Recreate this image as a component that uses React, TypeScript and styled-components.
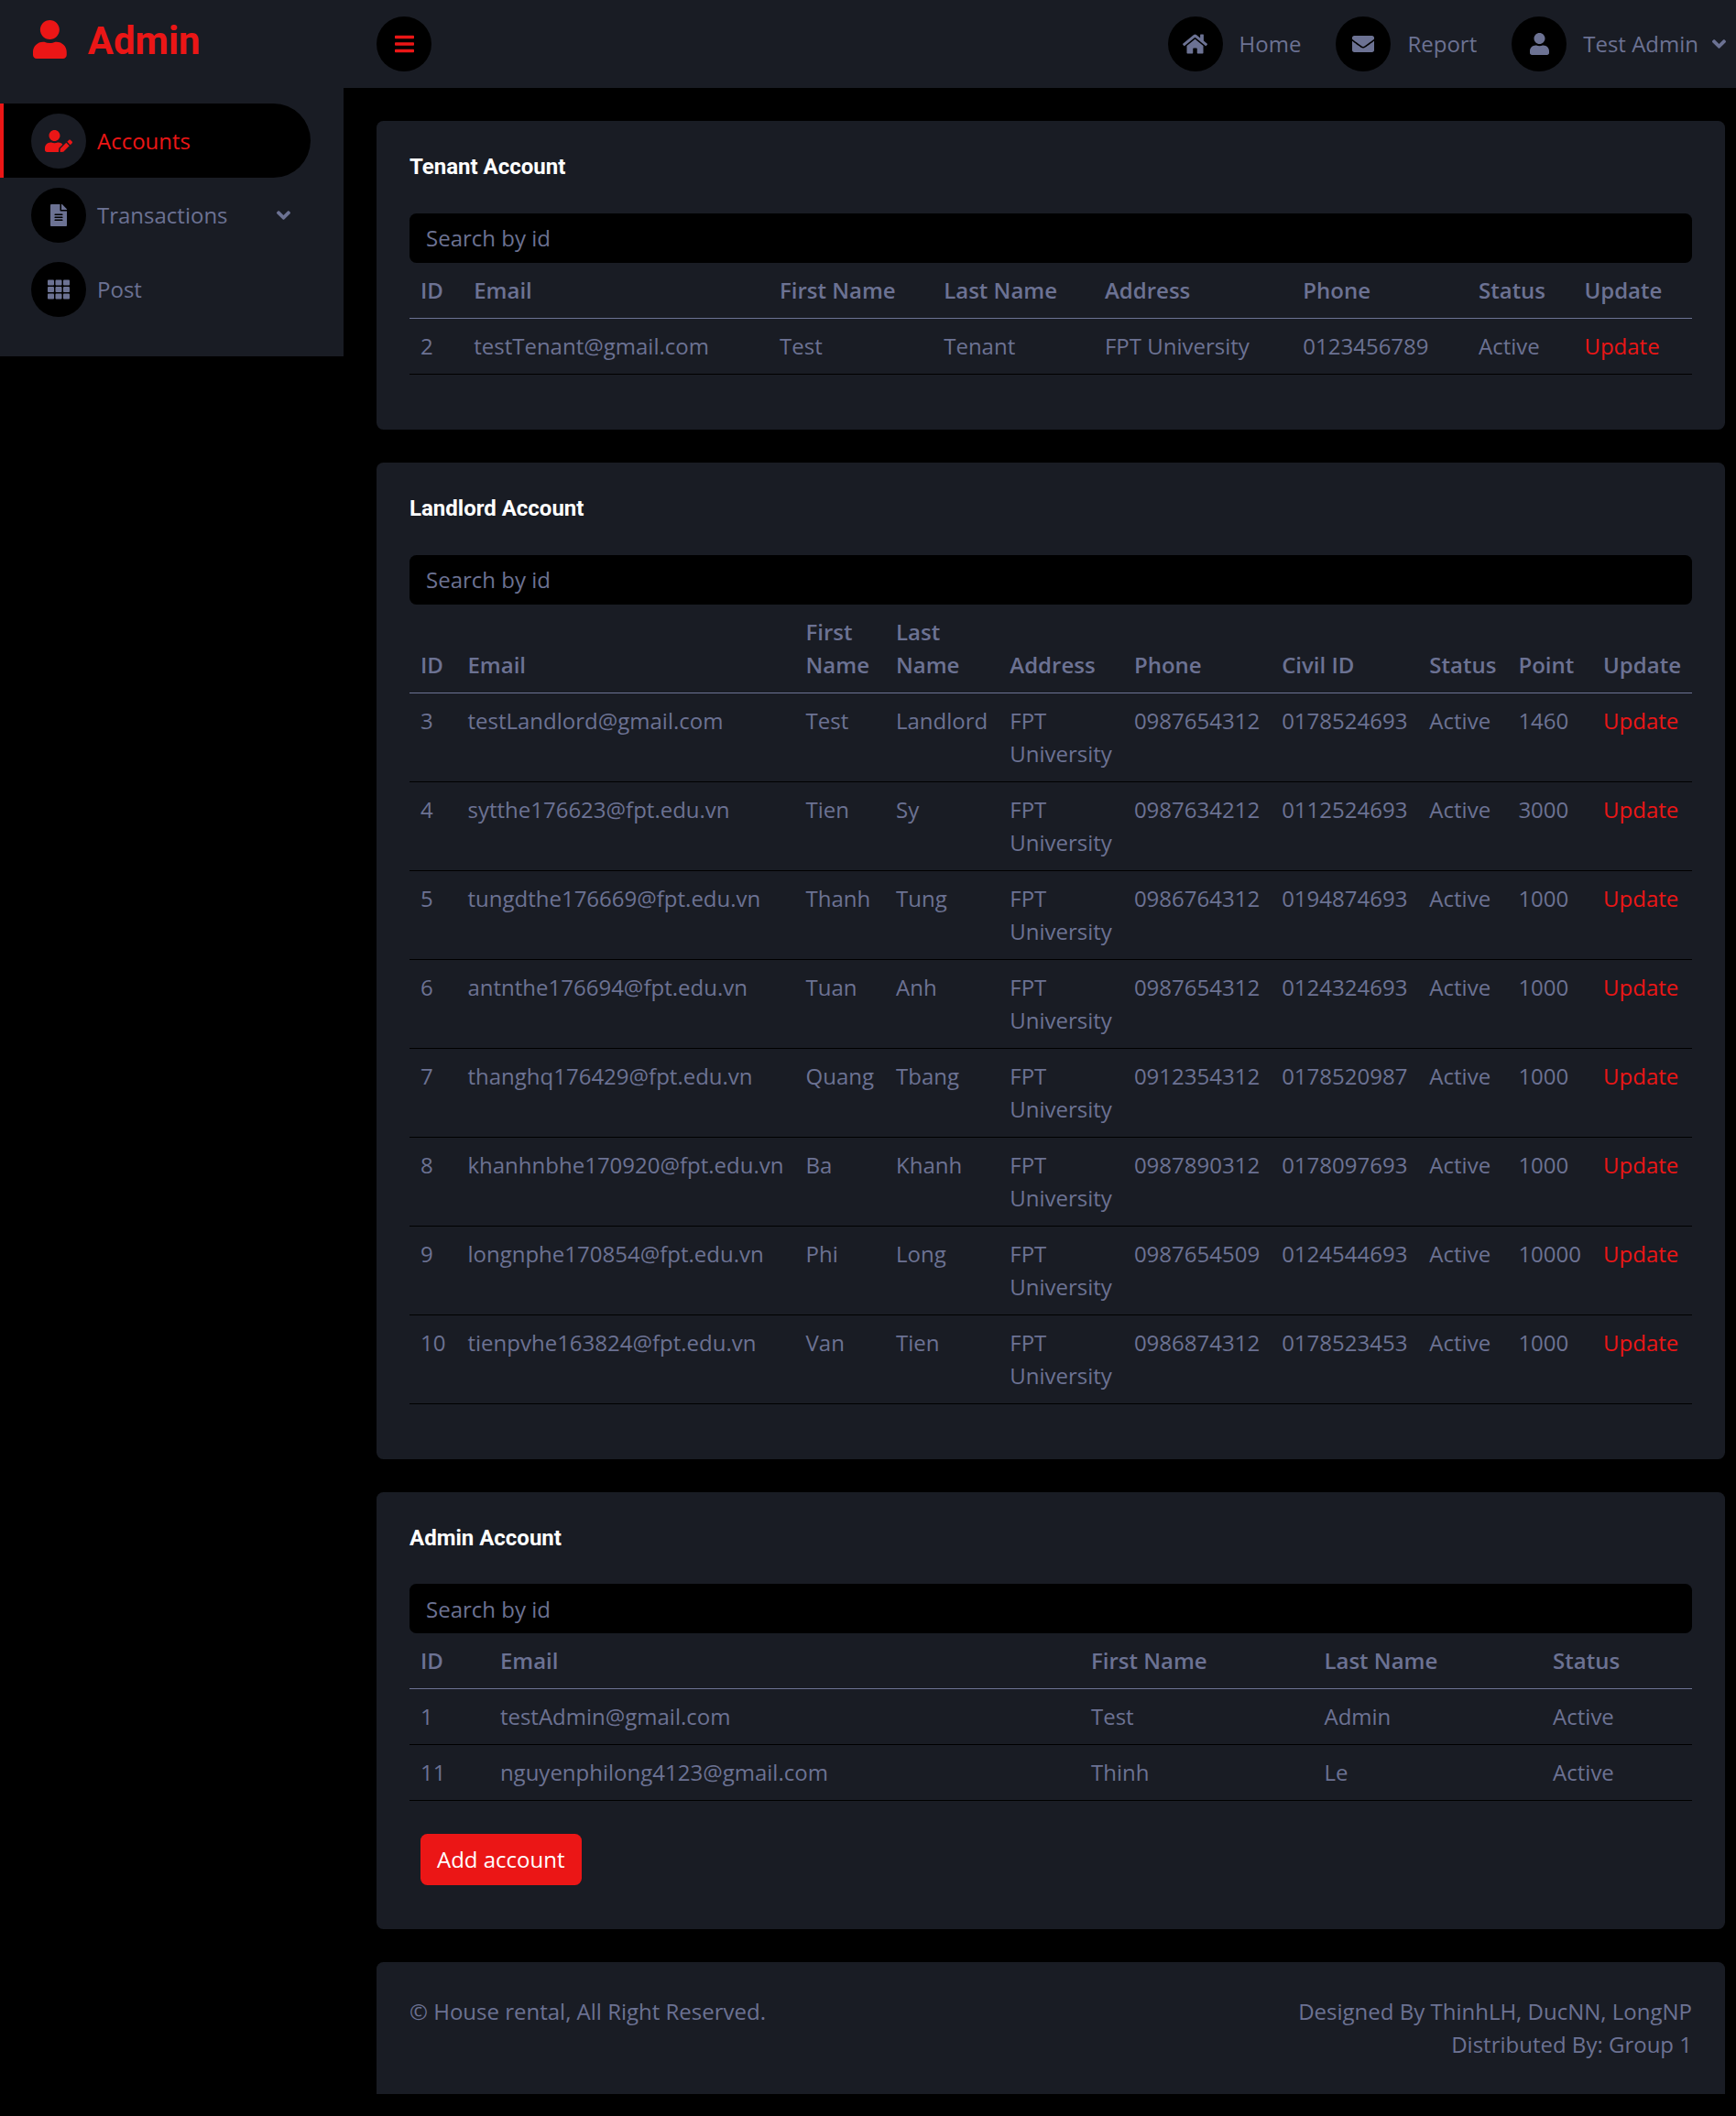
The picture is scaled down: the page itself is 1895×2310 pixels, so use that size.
import React from "react";
import styled, { createGlobalStyle } from "styled-components";
import { FaAngleDown, FaBars, FaEnvelope, FaFileAlt, FaHome, FaTh, FaUser, FaUserEdit } from "react-icons/fa";

const Global = createGlobalStyle`
  html, body { margin: 0; padding: 0; background: #000; }
  body { font-family: "Open Sans", sans-serif; font-size: 24px; line-height: 1.5; color: #6C7293; }
  * { box-sizing: border-box; }
`;

const Shell = styled.div`display: flex; align-items: flex-start; width: 100%; min-height: 2310px;`;
const Sidebar = styled.aside`width: 375px; flex: none; background: #191C24; padding: 18px 36px 33px 0;`;
const Brand = styled.div`display: flex; align-items: center; margin: 0 0 45px 36px; height: 50px; color: #EB1616;`;
const BrandIcon = styled.span`display: flex; margin-right: 23px; svg { width: 36.75px; height: 42px; }`;
const BrandTitle = styled.h3`margin: 0; padding-top: 4px; font-family: Roboto, sans-serif; font-weight: 700; font-size: 42px; line-height: 50px;`;
const NavItem = styled.div<{ $active?: boolean }>`
  display: flex; align-items: center; height: 81px; padding: 0 22px 0 30px;
  border-left: 4.5px solid ${p => (p.$active ? "#EB1616" : "transparent")};
  border-radius: 0 45px 45px 0;
  background: ${p => (p.$active ? "#000" : "transparent")};
  color: ${p => (p.$active ? "#EB1616" : "#6C7293")};
`;
const Round = styled.span<{ $light?: boolean; $red?: boolean; $glyph: number }>`
  display: inline-flex; align-items: center; justify-content: center; flex: none;
  width: 60px; height: 60px; border-radius: 50%;
  background: ${p => (p.$light ? "#191C24" : "#000")};
  color: ${p => (p.$red ? "#EB1616" : "inherit")};
  svg { width: ${p => p.$glyph}px; height: 24px; }
`;
const NavLabel = styled.span`margin-left: 12px; flex: 1;`;
const Arrow = styled.span`display: flex; svg { width: 15px; height: 24px; }`;
const Main = styled.main`flex: 1; min-width: 0;`;
const Topbar = styled.header`
  display: flex; align-items: center; height: 96px; background: #191C24; padding: 0 11px 0 36px;
`;
const TopSpacer = styled.div`flex: 1;`;
const TopItem = styled.div`display: flex; align-items: center; margin-left: 38px;`;
const TopLabel = styled.span`margin-left: 18px;`;
const TopArrow = styled(Arrow)`margin-left: 15px;`;
const Content = styled.div`display: flex; flex-direction: column; gap: 36px; padding: 36px 12px 24px 36px;`;
const Card = styled.section<{ $footer?: boolean }>`
  background: #191C24; padding: 36px;
  border-radius: ${p => (p.$footer ? "7.5px 7.5px 0 0" : "7.5px")};
`;
const CardTitle = styled.h6`
  margin: 0 0 36px; font-family: Roboto, sans-serif; font-weight: 700; font-size: 24px; line-height: 28.8px; color: #fff;
`;
const Search = styled.input`
  display: block; width: 100%; height: 54px; padding: 9px 18px; border: 0; border-radius: 7.5px;
  background: #000; color: #6C7293; font: inherit; outline: none;
  &::placeholder { color: #6C7293; opacity: 1; }
`;
const Table = styled.table`width: 100%; border-collapse: collapse; margin-bottom: 24px;`;
const Th = styled.th`
  padding: 12px; text-align: left; vertical-align: bottom; font-weight: 600; border-bottom: 1px solid #6C7293;
`;
const Td = styled.td`padding: 12px; vertical-align: top; border-bottom: 1px solid #000;`;
const UpdateLink = styled.a`color: #EB1616; text-decoration: none;`;
const AddButton = styled.button`
  display: block; margin: 36px 0 12px 12px; padding: 9px 18px; height: 56px; border: 0; border-radius: 7.5px;
  background: #EB1616; color: #fff; font: inherit;
`;
const FooterRow = styled.div`display: flex; justify-content: space-between;`;
const FooterRight = styled.div`text-align: right;`;

const tenantRows = [["2", "testTenant@gmail.com", "Test", "Tenant", "FPT University", "0123456789", "Active"]];
const landlordRows = [
  ["3", "testLandlord@gmail.com", "Test", "Landlord", "FPT University", "0987654312", "0178524693", "Active", "1460"],
  ["4", "sytthe176623@fpt.edu.vn", "Tien", "Sy", "FPT University", "0987634212", "0112524693", "Active", "3000"],
  ["5", "tungdthe176669@fpt.edu.vn", "Thanh", "Tung", "FPT University", "0986764312", "0194874693", "Active", "1000"],
  ["6", "antnthe176694@fpt.edu.vn", "Tuan", "Anh", "FPT University", "0987654312", "0124324693", "Active", "1000"],
  ["7", "thanghq176429@fpt.edu.vn", "Quang", "Tbang", "FPT University", "0912354312", "0178520987", "Active", "1000"],
  ["8", "khanhnbhe170920@fpt.edu.vn", "Ba", "Khanh", "FPT University", "0987890312", "0178097693", "Active", "1000"],
  ["9", "longnphe170854@fpt.edu.vn", "Phi", "Long", "FPT University", "0987654509", "0124544693", "Active", "10000"],
  ["10", "tienpvhe163824@fpt.edu.vn", "Van", "Tien", "FPT University", "0986874312", "0178523453", "Active", "1000"],
];
const adminRows = [
  ["1", "testAdmin@gmail.com", "Test", "Admin", "Active"],
  ["11", "nguyenphilong4123@gmail.com", "Thinh", "Le", "Active"],
];

function DataTable({ head, rows, update }: { head: string[]; rows: string[][]; update?: boolean }) {
  return (
    <Table>
      <thead>
        <tr>{head.map(h => <Th key={h}>{h}</Th>)}</tr>
      </thead>
      <tbody>
        {rows.map(r => (
          <tr key={r[0]}>
            {r.map((c, i) => <Td key={i}>{c}</Td>)}
            {update && <Td><UpdateLink href="#">Update</UpdateLink></Td>}
          </tr>
        ))}
      </tbody>
    </Table>
  );
}

export default function App() {
  return (
    <>
      <Global />
      <Shell>
        <Sidebar>
          <Brand>
            <BrandIcon><FaUser /></BrandIcon>
            <BrandTitle>Admin</BrandTitle>
          </Brand>
          <NavItem $active>
            <Round $light $glyph={30}><FaUserEdit /></Round>
            <NavLabel>Accounts</NavLabel>
          </NavItem>
          <NavItem>
            <Round $glyph={18}><FaFileAlt /></Round>
            <NavLabel>Transactions</NavLabel>
            <Arrow><FaAngleDown /></Arrow>
          </NavItem>
          <NavItem>
            <Round $glyph={24}><FaTh /></Round>
            <NavLabel>Post</NavLabel>
          </NavItem>
        </Sidebar>
        <Main>
          <Topbar>
            <Round $red $glyph={21}><FaBars /></Round>
            <TopSpacer />
            <TopItem><Round $glyph={27}><FaHome /></Round><TopLabel>Home</TopLabel></TopItem>
            <TopItem><Round $glyph={24}><FaEnvelope /></Round><TopLabel>Report</TopLabel></TopItem>
            <TopItem>
              <Round $glyph={21}><FaUser /></Round>
              <TopLabel>Test Admin</TopLabel>
              <TopArrow><FaAngleDown /></TopArrow>
            </TopItem>
          </Topbar>
          <Content>
            <Card>
              <CardTitle>Tenant Account</CardTitle>
              <Search placeholder="Search by id" />
              <DataTable head={["ID", "Email", "First Name", "Last Name", "Address", "Phone", "Status", "Update"]} rows={tenantRows} update />
            </Card>
            <Card>
              <CardTitle>Landlord Account</CardTitle>
              <Search placeholder="Search by id" />
              <DataTable head={["ID", "Email", "First Name", "Last Name", "Address", "Phone", "Civil ID", "Status", "Point", "Update"]} rows={landlordRows} update />
            </Card>
            <Card>
              <CardTitle>Admin Account</CardTitle>
              <Search placeholder="Search by id" />
              <DataTable head={["ID", "Email", "First Name", "Last Name", "Status"]} rows={adminRows} />
              <AddButton>Add account</AddButton>
            </Card>
            <Card $footer>
              <FooterRow>
                <div>© House rental, All Right Reserved.</div>
                <FooterRight>Designed By ThinhLH, DucNN, LongNP<br />Distributed By: Group 1</FooterRight>
              </FooterRow>
            </Card>
          </Content>
        </Main>
      </Shell>
    </>
  );
}
